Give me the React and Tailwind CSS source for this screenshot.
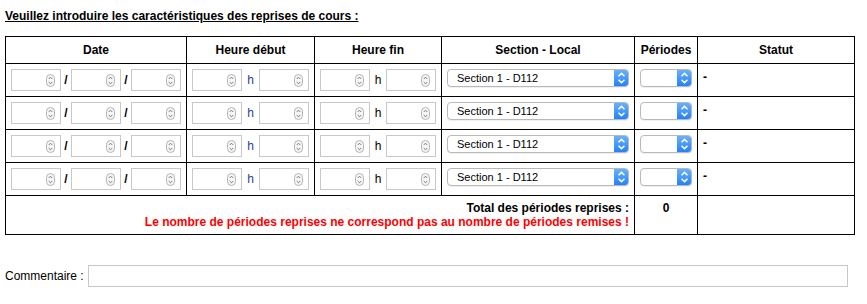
import React from 'react';

const Spinner = () => (
    <svg width="9" height="13" viewBox="0 0 9 13" className="block">
        <rect x="0.5" y="0.5" width="8" height="12" rx="4" fill="#f6f6f6" stroke="#b4b4b4" />
        <path d="M2.7 5 L4.5 3.2 L6.3 5" fill="none" stroke="#6b6b6b" strokeWidth="0.9" />
        <path d="M2.7 8 L4.5 9.8 L6.3 8" fill="none" stroke="#6b6b6b" strokeWidth="0.9" />
    </svg>
);

const NumberBox = () => (
    <div className="w-[50px] h-[22px] border border-[#c8c8c8] bg-white flex items-center justify-end pr-[5px]">
        <Spinner />
    </div>
);

const Arrows = () => (
    <svg width="15" height="18" viewBox="0 0 15 18" className="block">
        <path d="M4.5 7.2 L7.5 4.4 L10.5 7.2" fill="none" stroke="#fff" strokeWidth="1.5" />
        <path d="M4.5 10.8 L7.5 13.6 L10.5 10.8" fill="none" stroke="#fff" strokeWidth="1.5" />
    </svg>
);

const MacSelect = ({ width, label }) => (
    <div
        className={`${width} h-[18px] rounded-[4px] border border-[#b9b9b9] bg-white flex items-stretch overflow-hidden shadow-[0_1px_0_rgba(0,0,0,0.06)]`}
    >
        <div className="flex-1 pl-[9px] text-[11px] leading-[16px] text-black">{label}</div>
        <div className="w-[15px] bg-gradient-to-b from-[#6db3fb] to-[#1b7ef9] -my-px -mr-px">
            <Arrows />
        </div>
    </div>
);

const rows = [1, 2, 3, 4];

const App = () => {
    return (
        <div className="w-[867px] h-[304px] bg-white px-[5px] pt-[9px] text-black font-['Liberation_Sans',Arial,sans-serif] text-[12px] leading-[14px]">
            <p className="font-bold underline">Veuillez introduire les caractéristiques des reprises de cours :</p>

            {/* Table */}
            <div className="mt-[13px] w-[850px] grid grid-cols-[180px_127px_126px_192px_62px_156px] gap-px bg-black border border-black">
                <div className="bg-white h-[26px] flex items-center justify-center font-bold">Date</div>
                <div className="bg-white flex items-center justify-center font-bold">Heure début</div>
                <div className="bg-white flex items-center justify-center font-bold">Heure fin</div>
                <div className="bg-white flex items-center justify-center font-bold">Section - Local</div>
                <div className="bg-white flex items-center justify-center font-bold">Périodes</div>
                <div className="bg-white flex items-center justify-center font-bold">Statut</div>

                {rows.map((r) => (
                    <React.Fragment key={r}>
                        <div className="bg-white h-[32px] pt-[5px] pl-[5px] flex items-start">
                            <NumberBox />
                            <span className="w-[10px] text-center font-bold leading-[22px]">/</span>
                            <NumberBox />
                            <span className="w-[10px] text-center font-bold leading-[22px]">/</span>
                            <NumberBox />
                        </div>
                        <div className="bg-white pt-[5px] pl-[5px] flex items-start">
                            <NumberBox />
                            <span className="w-[17px] text-center leading-[22px] text-[#17468a]">h</span>
                            <NumberBox />
                        </div>
                        <div className="bg-white pt-[5px] pl-[5px] flex items-start">
                            <NumberBox />
                            <span className="w-[16px] text-center leading-[22px]">h</span>
                            <NumberBox />
                        </div>
                        <div className="bg-white pt-[5px] pl-[5px]">
                            <MacSelect width="w-[182px]" label="Section 1 - D112" />
                        </div>
                        <div className="bg-white pt-[5px] pl-[5px]">
                            <MacSelect width="w-[52px]" label="" />
                        </div>
                        <div className="bg-white pt-[6px] pl-[5px] font-bold">-</div>
                    </React.Fragment>
                ))}

                <div className="col-span-4 bg-white h-[38px] pt-[5px] pr-[5px] text-right font-bold">
                    <div>Total des périodes reprises :</div>
                    <div className="text-[#ff0000]">Le nombre de périodes reprises ne correspond pas au nombre de périodes remises !</div>
                </div>
                <div className="bg-white pt-[5px] text-center font-bold">0</div>
                <div className="bg-white" />
            </div>

            {/* Comment */}
            <div className="mt-[30px] flex items-center gap-[4px]">
                <span>Commentaire :</span>
                <div className="w-[760px] h-[22px] border border-[#c8c8c8] bg-white" />
            </div>
        </div>
    );
};

export default App;
